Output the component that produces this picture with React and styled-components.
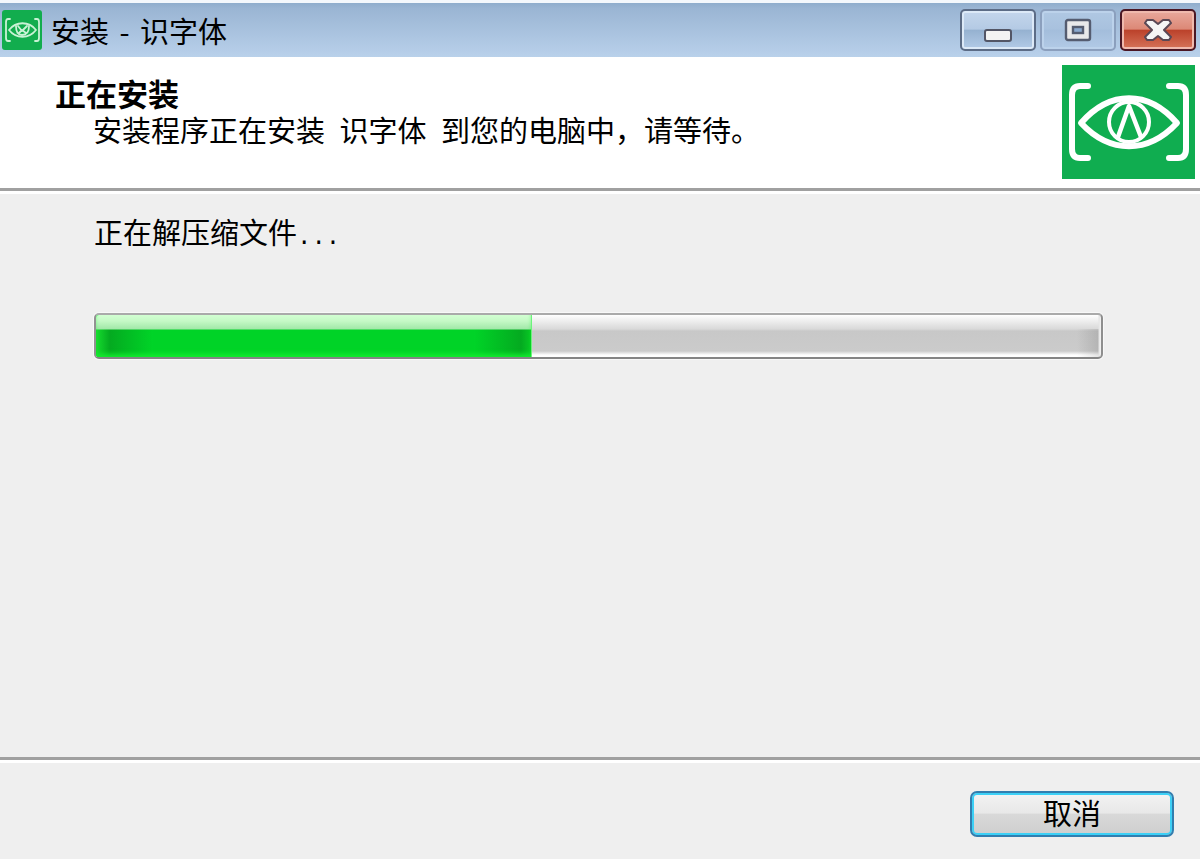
import React from "react";
import styled, { createGlobalStyle } from "styled-components";

const GlobalStyle = createGlobalStyle`
  * {
    box-sizing: border-box;
  }
  body {
    margin: 0;
    color: #000;
    background: #efefef;
    font-family: "Noto Sans CJK SC", sans-serif;
    font-size: 29px;
    line-height: 36px;
  }
`;

const Window = styled.main`
  display: flex;
  flex-direction: column;
  min-height: 100vh;
`;

const TitleBar = styled.header`
  display: flex;
  align-items: center;
  height: 57px;
  padding: 0 4px 0 2px;
  border-top: 3px solid #f4f8fc;
  background: linear-gradient(#8fadcc 0, #9ab5d3 5px, #b5cde8 48px, #b9d1ea);
`;

const AppIcon = styled.svg`
  flex: none;
  width: 40px;
  height: 40px;
  margin-right: 9px;
  border-radius: 3px;
`;

const Title = styled.h1`
  flex: 1;
  margin: 0;
  font-size: 29px;
  font-weight: 400;
`;

const Spaced = styled.span`
  margin: 0 ${(props) => (props.$wide ? "8px" : "4px")};
`;

const Controls = styled.div`
  display: flex;
  gap: 4px;
`;

const controlLooks = {
  normal: {
    border: "#5c6c86",
    rim: "#dce9f7",
    fill: "linear-gradient(#c4d6ec, #b4cae4 48%, #95b1d0 50%, #b3cbe7)",
  },
  disabled: {
    border: "#8b9fbd",
    rim: "#bcd2eb",
    fill: "linear-gradient(#b0c8e3, #a8c1de 48%, #a3bddb 50%, #b2cae6)",
  },
  close: {
    border: "#4b1724",
    rim: "#efb9ad",
    fill: "linear-gradient(#e8a99d, #dc8876 48%, #bb412a 50%, #d6745a)",
  },
};

const ControlButton = styled.button`
  display: flex;
  align-items: center;
  justify-content: center;
  width: 76px;
  height: 42px;
  padding: 0;
  border: 2px solid ${(props) => controlLooks[props.$look].border};
  border-radius: 5px;
  background: ${(props) => controlLooks[props.$look].fill};
  box-shadow: inset 0 0 0 2px ${(props) => controlLooks[props.$look].rim};
`;

const Banner = styled.section`
  display: flex;
  justify-content: space-between;
  align-items: flex-start;
  height: 131px;
  padding: 8px 5px 0 55px;
  background: #fff;
`;

const Heading = styled.h2`
  margin: 10px 0 0;
  font-size: 31px;
  font-weight: 700;
  line-height: 36px;
`;

const Description = styled.p`
  margin: 0 0 0 38px;
`;

const Logo = styled.svg`
  flex: none;
  width: 133px;
  height: 114px;
`;

const Divider = styled.hr`
  flex: none;
  width: 100%;
  height: 6px;
  margin: 0;
  border: 0;
  border-top: 3px solid #a0a0a0;
  border-bottom: 3px solid #fff;
`;

const Content = styled.section`
  flex: 1;
  padding: 19px 97px 0 94px;
`;

const Status = styled.p`
  margin: 0 0 63px;
`;

const Dots = styled.span`
  font-family: "Liberation Mono", monospace;
  font-size: 24px;
  line-height: 1;
`;

const ProgressTrack = styled.div`
  height: 46px;
  border: 2px solid;
  border-color: #aaa #8e8e8e #858585 #929292;
  border-radius: 5px;
  overflow: hidden;
  background:
    linear-gradient(270deg, #f4f4f4 0, #e4e4e4 2px, transparent 3px),
    linear-gradient(270deg, rgba(0, 0, 0, 0.12), transparent 24px) 0 14px
      no-repeat,
    linear-gradient(
      #fff 0,
      #f6f6f6 3px,
      #d9d9d9 14px,
      #c8c8c8 16px,
      #cbcbcb 36px,
      #fff 40px
    );
  box-shadow: 0 0 0 1px #f8f8f8;
`;

const ProgressFill = styled.div`
  height: 100%;
  border-right: 1px solid #6df37c;
  background:
    linear-gradient(#d2ffd2 0, #c5f9c6 6px, #a1e8a8 14px, transparent 15px),
    linear-gradient(
      90deg,
      #16dc2e 0,
      #04aa20 14px,
      #00d327 56px,
      transparent 57px,
      transparent calc(100% - 57px),
      #00d327 calc(100% - 56px),
      #04aa20 calc(100% - 10px),
      #08c925
    ),
    #00d327;
  box-shadow: inset 0 -5px 5px -2px #13ee2f;
`;

const Footer = styled.footer`
  display: flex;
  justify-content: flex-end;
  height: 96px;
  padding: 28px 26px 0;
`;

const CancelButton = styled.button`
  width: 204px;
  height: 46px;
  padding: 0 0 4px;
  border: 2px solid #327eaf;
  border-radius: 7px;
  background: linear-gradient(#f3f3f3, #e8e8e8 48%, #d9d9d9 50%, #cecece);
  box-shadow: inset 0 0 0 2px #3cd0f6;
  color: #000;
  font: inherit;
`;

const EyeDrawing = () => (
  <>
    <rect width="133" height="114" fill="#10ad50" />
    <g
      fill="none"
      stroke="#fff"
      strokeWidth="6"
      strokeLinecap="round"
      strokeLinejoin="round"
    >
      <path d="M26 21H18Q10 21 10 30V84Q10 93 18 93H26" />
      <path d="M107 21H116Q124 21 124 30V84Q124 93 116 93H107" />
      <path d="M19 58C48 25 86 25 115 58C86 89 48 89 19 58Z" />
      <circle cx="67" cy="57" r="20" strokeWidth="4" />
      <path d="M56 72L67 41L79 72" strokeWidth="4.5" />
    </g>
  </>
);

const SmallEyeDrawing = () => (
  <>
    <rect width="40" height="40" fill="#12ad4e" />
    <g
      fill="none"
      stroke="#c9f2d5"
      strokeWidth="1.8"
      strokeLinecap="round"
      strokeLinejoin="round"
    >
      <path d="M8 9H6Q4 9 4 12V28Q4 31 6 31H8M33 9H35Q37 9 37 12V28Q37 31 35 31H33" />
      <path d="M7 20C14 11 27 11 34 20C27 29 14 29 7 20Z" />
      <path d="M14 16Q14 25 20 25Q27 25 27 16M16 16L20 21L25 16M17 23L20 20L24 23" />
    </g>
  </>
);

const App = () => {
  const progress = 43.4;

  return (
    <Window>
      <GlobalStyle />
      <TitleBar>
        <AppIcon viewBox="0 0 40 40" aria-hidden="true">
          <SmallEyeDrawing />
        </AppIcon>
        <Title>
          安装 <Spaced>-</Spaced> 识字体
        </Title>
        <Controls>
          <ControlButton $look="normal" aria-label="最小化">
            <svg width="28" height="30" viewBox="0 0 28 30">
              <rect
                x="1"
                y="15"
                width="26"
                height="11"
                rx="2"
                fill="#f3f3f3"
                stroke="#535666"
                strokeWidth="2"
              />
            </svg>
          </ControlButton>
          <ControlButton $look="disabled" aria-label="最大化" disabled>
            <svg width="28" height="24" viewBox="0 0 28 24">
              <g stroke="#555c70" strokeWidth="2.4">
                <rect x="2" y="2" width="24" height="20" rx="2" fill="#e8e8ea" />
                <rect x="9" y="9" width="10" height="6" fill="#8ba9cf" />
              </g>
            </svg>
          </ControlButton>
          <ControlButton $look="close" aria-label="关闭">
            <svg width="28" height="24" viewBox="0 0 28 24">
              <path
                d="M3 2H9L14 6L19 2H25L27 5L20 12L27 19L25 22H19L14 18L9 22H3L1 19L8 12L1 5Z"
                fill="#f5f5f5"
                stroke="#5a4855"
                strokeWidth="2"
                strokeLinejoin="round"
              />
            </svg>
          </ControlButton>
        </Controls>
      </TitleBar>

      <Banner>
        <div>
          <Heading>正在安装</Heading>
          <Description>
            安装程序正在安装 <Spaced $wide>识字体</Spaced>{" "}
            到您的电脑中，请等待。
          </Description>
        </div>
        <Logo viewBox="0 0 133 114" preserveAspectRatio="none" aria-hidden="true">
          <EyeDrawing />
        </Logo>
      </Banner>
      <Divider />

      <Content>
        <Status id="status">
          正在解压缩文件<Dots>...</Dots>
        </Status>
        <ProgressTrack
          role="progressbar"
          aria-labelledby="status"
          aria-valuemin={0}
          aria-valuemax={100}
          aria-valuenow={progress}
        >
          <ProgressFill style={{ width: `${progress}%` }} />
        </ProgressTrack>
      </Content>

      <Divider />
      <Footer>
        <CancelButton>取消</CancelButton>
      </Footer>
    </Window>
  );
};

export default App;
